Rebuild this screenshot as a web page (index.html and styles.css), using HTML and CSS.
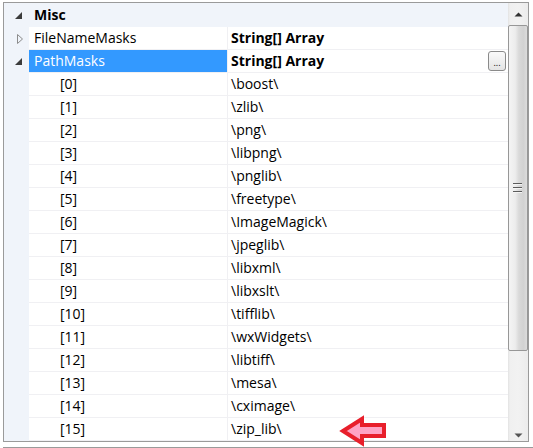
FILE: index.html
```html
<!DOCTYPE html>
<html>
<head>
<meta charset="utf-8">
<link rel="stylesheet" href="styles.css">
</head>
<body>
<div class="grid">
  <div class="main">
    <div class="row cat">
      <span class="gut"><svg class="tri" width="10" height="10" viewBox="0 0 10 10"><polygon points="1,8 8,8 8,1" fill="#3c3c3c"/></svg></span>
      <span class="name bold">Misc</span>
    </div>
    <div class="row">
      <span class="gut"><svg class="tri" width="10" height="12" viewBox="0 0 10 12"><polygon points="3.5,1.5 8.5,6 3.5,10.5" fill="none" stroke="#8c8c8c" stroke-width="1"/></svg></span>
      <span class="name">FileNameMasks</span>
      <span class="val bold">String[] Array</span>
    </div>
    <div class="row sel">
      <span class="gut"><svg class="tri" width="10" height="10" viewBox="0 0 10 10"><polygon points="1,8 8,8 8,1" fill="#3c3c3c"/></svg></span>
      <span class="name">PathMasks</span>
      <span class="val bold">String[] Array<span class="dots">...</span></span>
    </div>
    <div class="row"><span class="gut"></span><span class="name idx">[0]</span><span class="val">\boost\</span></div>
    <div class="row"><span class="gut"></span><span class="name idx">[1]</span><span class="val">\zlib\</span></div>
    <div class="row"><span class="gut"></span><span class="name idx">[2]</span><span class="val">\png\</span></div>
    <div class="row"><span class="gut"></span><span class="name idx">[3]</span><span class="val">\libpng\</span></div>
    <div class="row"><span class="gut"></span><span class="name idx">[4]</span><span class="val">\pnglib\</span></div>
    <div class="row"><span class="gut"></span><span class="name idx">[5]</span><span class="val">\freetype\</span></div>
    <div class="row"><span class="gut"></span><span class="name idx">[6]</span><span class="val">\ImageMagick\</span></div>
    <div class="row"><span class="gut"></span><span class="name idx">[7]</span><span class="val">\jpeglib\</span></div>
    <div class="row"><span class="gut"></span><span class="name idx">[8]</span><span class="val">\libxml\</span></div>
    <div class="row"><span class="gut"></span><span class="name idx">[9]</span><span class="val">\libxslt\</span></div>
    <div class="row"><span class="gut"></span><span class="name idx">[10]</span><span class="val">\tifflib\</span></div>
    <div class="row"><span class="gut"></span><span class="name idx">[11]</span><span class="val">\wxWidgets\</span></div>
    <div class="row"><span class="gut"></span><span class="name idx">[12]</span><span class="val">\libtiff\</span></div>
    <div class="row"><span class="gut"></span><span class="name idx">[13]</span><span class="val">\mesa\</span></div>
    <div class="row"><span class="gut"></span><span class="name idx">[14]</span><span class="val">\cximage\</span></div>
    <div class="row"><span class="gut"></span><span class="name idx">[15]</span><span class="val">\zip_lib\</span></div>
  </div>
  <div class="scroll">
    <div class="sbtn"><svg width="9" height="5" viewBox="0 0 9 5"><polygon points="0.5,4.5 4.5,0.5 8.5,4.5" fill="#333"/></svg></div>
    <div class="thumb"><span class="grip"></span><span class="grip"></span><span class="grip"></span></div>
    <div class="track"></div>
    <div class="sbtn down"><svg width="9" height="5" viewBox="0 0 9 5"><polygon points="0.5,0.5 8.5,0.5 4.5,4.5" fill="#555"/></svg></div>
  </div>
</div>
<div class="below"></div>
<svg class="arrow" width="54" height="36" viewBox="336 413 54 36">
  <polygon points="343,431 362,419 362,425 384,425 384,436 362,436 362,443" fill="#ffa3c4" stroke="#e81f2b" stroke-width="4" stroke-linejoin="miter"/>
</svg>
</body>
</html>
```
FILE: styles.css
```css
html, body {
  margin: 0;
  padding: 0;
  background: #ffffff;
}
body {
  font-family: "Open Sans", "Noto Sans", sans-serif;
  font-size: 14px;
  color: #000;
  position: relative;
  width: 533px;
  height: 448px;
  overflow: hidden;
}
.grid {
  margin: 2px 4px 0 3px;
  border: 1px solid #9a9a9a;
  height: 438px;
  display: flex;
  overflow: hidden;
}
.main {
  width: 504px;
  display: flex;
  flex-direction: column;
  background: #fff;
}
.row {
  height: 23px;
  flex: none;
  display: flex;
  box-sizing: border-box;
  border-bottom: 1px solid #f0f0f3;
}
.row .gut {
  width: 25px;
  flex: none;
  background: #f0f4fa;
  display: flex;
  align-items: center;
  justify-content: center;
  margin-bottom: -1px;
}
.tri {
  display: block;
  margin-left: 4px;
}
.row.cat {
  height: 24px;
  background: #f0f4fa;
  border-bottom: none;
}
.name {
  width: 198px;
  flex: none;
  box-sizing: border-box;
  padding-left: 5px;
  line-height: 22px;
  white-space: nowrap;
}
.name.idx {
  padding-left: 31px;
}
.val {
  flex: 1;
  border-left: 1px solid #f0f0f3;
  padding-left: 3px;
  line-height: 22px;
  white-space: nowrap;
  display: flex;
  align-items: center;
}
.bold {
  font-weight: 700;
}
.cat .name {
  line-height: 24px;
}
.sel .name {
  background: #3399ff;
  color: #fff;
}
.dots {
  margin-left: auto;
  margin-right: 2px;
  width: 18px;
  height: 20px;
  box-sizing: border-box;
  border: 1px solid #8a8a8a;
  border-radius: 3px;
  background: linear-gradient(#fafafa, #e4e4e4);
  font-size: 9px;
  font-weight: 400;
  line-height: 22px;
  text-align: center;
  letter-spacing: 0;
  color: #000;
}
.scroll {
  width: 20px;
  flex: none;
  display: flex;
  flex-direction: column;
  background: linear-gradient(90deg, #e2e2e2 0, #f0f0f0 2px, #f2f2f2 10px, #ececec 100%);
}
.sbtn {
  height: 22px;
  flex: none;
  display: flex;
  align-items: center;
  justify-content: center;
}
.sbtn svg {
  display: block;
}
.sbtn.down {
  height: 18px;
  align-items: flex-start;
  padding-top: 10px;
  box-sizing: border-box;
}
.thumb {
  height: 326px;
  flex: none;
  box-sizing: border-box;
  border: 1px solid #979797;
  border-radius: 2px;
  background: linear-gradient(90deg, #f4f4f4 0, #ececec 35%, #d9d9d9 55%, #d2d2d2 80%, #dcdcdc 100%);
  display: flex;
  flex-direction: column;
  align-items: center;
  justify-content: center;
  gap: 2px;
  padding-right: 1px;
}
.grip {
  width: 9px;
  height: 1px;
  background: #5c5c5c;
  border-bottom: 1px solid #f4f4f4;
}
.track {
  flex: 1;
}
.below {
  margin: 5px 0 0 3px;
  border-top: 1px solid #9a9a9a;
}
.arrow {
  position: absolute;
  left: 336px;
  top: 413px;
}
```
